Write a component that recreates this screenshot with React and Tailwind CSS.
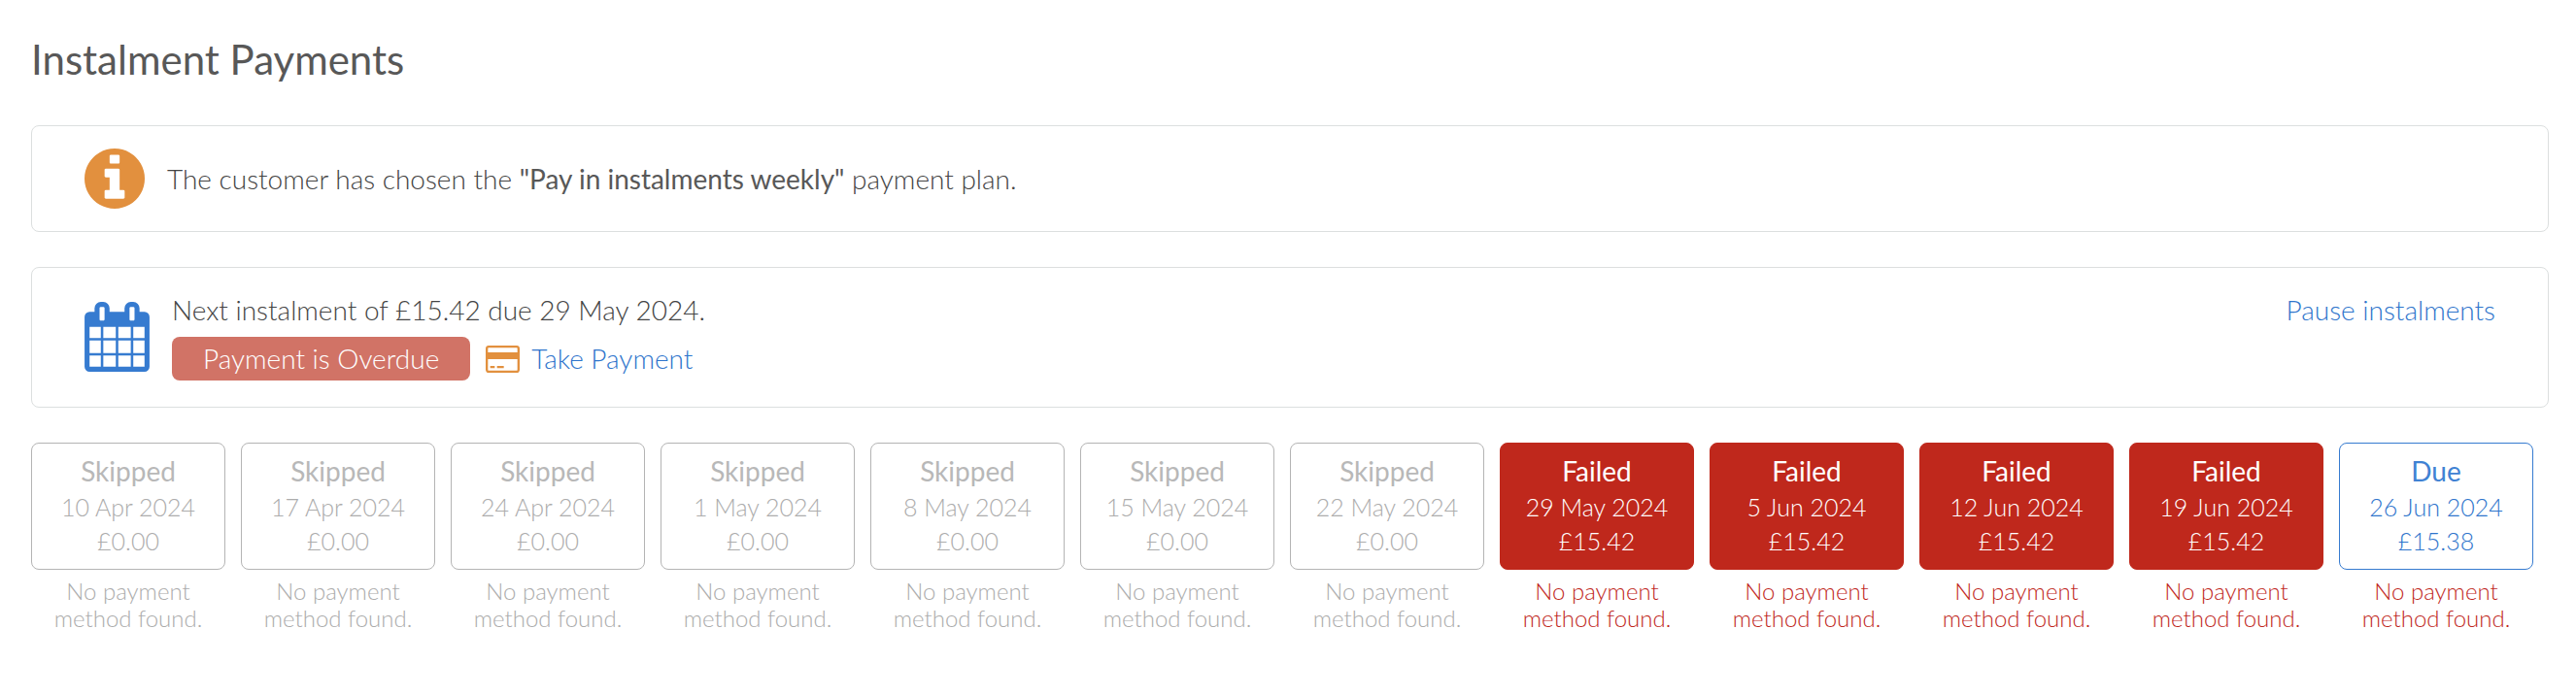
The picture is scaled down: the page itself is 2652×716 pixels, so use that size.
import React from 'react';

// Instalment schedule for the order
const instalments = [
    { id: 1, status: 'Skipped', date: '10 Apr 2024', amount: 0 },
    { id: 2, status: 'Skipped', date: '17 Apr 2024', amount: 0 },
    { id: 3, status: 'Skipped', date: '24 Apr 2024', amount: 0 },
    { id: 4, status: 'Skipped', date: '1 May 2024', amount: 0 },
    { id: 5, status: 'Skipped', date: '8 May 2024', amount: 0 },
    { id: 6, status: 'Skipped', date: '15 May 2024', amount: 0 },
    { id: 7, status: 'Skipped', date: '22 May 2024', amount: 0 },
    { id: 8, status: 'Failed', date: '29 May 2024', amount: 15.42 },
    { id: 9, status: 'Failed', date: '5 Jun 2024', amount: 15.42 },
    { id: 10, status: 'Failed', date: '12 Jun 2024', amount: 15.42 },
    { id: 11, status: 'Failed', date: '19 Jun 2024', amount: 15.42 },
    { id: 12, status: 'Due', date: '26 Jun 2024', amount: 15.38 },
];

const cardStyles = {
    Skipped: 'border-[#b4b4b4] text-[#acacac]',
    Failed: 'border-[#bf281c] bg-[#bf281c] text-white',
    Due: 'border-[#367bd0] text-[#2f75cc]',
};

const labelStyles = {
    Skipped: 'text-[#b8b8b8]',
    Failed: 'text-white',
    Due: 'text-[#4082d3]',
};

const noteStyles = {
    Skipped: 'text-[#acacac]',
    Failed: 'text-[#bf281c]',
    Due: 'text-[#bf281c]',
};

const InfoIcon = () => (
    <svg className="size-[62px] shrink-0 fill-[#e2903e]" viewBox="128 128 1536 1536" aria-hidden="true">
        <path d="M1152 1376v-160q0-14-9-23t-23-9h-96v-512q0-14-9-23t-23-9h-320q-14 0-23 9t-9 23v160q0 14 9 23t23 9h96v320h-96q-14 0-23 9t-9 23v160q0 14 9 23t23 9h448q14 0 23-9t9-23zm-128-896v-160q0-14-9-23t-23-9h-192q-14 0-23 9t-9 23v160q0 14 9 23t23 9h192q14 0 23-9t9-23zm640 416q0 209-103 385.5t-279.5 279.5-385.5 103-385.5-103-279.5-279.5-103-385.5 103-385.5 279.5-279.5 385.5-103 385.5 103 279.5 279.5 103 385.5z" />
    </svg>
);

const CalendarIcon = () => (
    <svg className="h-[72px] w-[67px] shrink-0 fill-[#367bd0]" viewBox="0 0 1664 1792" aria-hidden="true">
        <path d="M128 1664h288v-288h-288v288zm352 0h320v-288h-320v288zm-352-352h288v-320h-288v320zm352 0h320v-320h-320v320zm-352-384h288v-288h-288v288zm736 736h320v-288h-320v288zm-384-736h320v-288h-320v288zm768 736h288v-288h-288v288zm-384-352h320v-320h-320v320zm-352-864v-288q0-13-9.5-22.5t-22.5-9.5h-64q-13 0-22.5 9.5t-9.5 22.5v288q0 13 9.5 22.5t22.5 9.5h64q13 0 22.5-9.5t9.5-22.5zm736 864h288v-320h-288v320zm-384-384h320v-288h-320v288zm384 0h288v-288h-288v288zm32-480v-288q0-13-9.5-22.5t-22.5-9.5h-64q-13 0-22.5 9.5t-9.5 22.5v288q0 13 9.5 22.5t22.5 9.5h64q13 0 22.5-9.5t9.5-22.5zm384-64v1280q0 52-38 90t-90 38h-1408q-52 0-90-38t-38-90v-1280q0-52 38-90t90-38h128v-96q0-66 47-113t113-47h64q66 0 113 47t47 113v96h384v-96q0-66 47-113t113-47h64q66 0 113 47t47 113v96h128q52 0 90 38t38 90z" />
    </svg>
);

const CardIcon = () => (
    <svg className="h-7 w-[35px] shrink-0 fill-[#e2903e]" viewBox="0 128 1920 1536" aria-hidden="true">
        <path d="M1760 128q66 0 113 47t47 113v1216q0 66-47 113t-113 47h-1600q-66 0-113-47t-47-113v-1216q0-66 47-113t113-47h1600zm-1600 128q-13 0-22.5 9.5t-9.5 22.5v224h1664v-224q0-13-9.5-22.5t-22.5-9.5h-1600zm1600 1280q13 0 22.5-9.5t9.5-22.5v-608h-1664v608q0 13 9.5 22.5t22.5 9.5h1600zm-1504-128v-128h256v128h-256zm384 0v-128h384v128h-384z" />
    </svg>
);

const Instalment = ({ item }) => (
    <li className="pr-4 text-center">
        <div className={`rounded-lg border pt-2 pb-[11px] text-[25px] leading-[35px] ${cardStyles[item.status]}`}>
            <h2 className={`text-[28px] leading-10 font-normal ${labelStyles[item.status]}`}>{item.status}</h2>
            <p>{item.date}</p>
            <p>£{item.amount.toFixed(2)}</p>
        </div>
        <p className={`mt-2 text-2xl leading-7 ${noteStyles[item.status]}`}>
            No payment
            <br />
            method found.
        </p>
    </li>
);

const App = () => {
    return (
        <main className="px-7 pt-[33px] pl-8 font-['Lato',sans-serif] text-[28px] leading-10 font-light text-[#444444]">
            <h1 className="text-[42px] leading-14 font-normal text-[#585858]">Instalment Payments</h1>

            {/* Chosen plan */}
            <section className="mt-10 flex items-center gap-[23px] rounded-lg border border-[#dcdfdf] px-[54px] py-[23px]">
                <InfoIcon />
                <p>
                    The customer has chosen the{' '}
                    <strong className="font-normal text-[#585858]">"Pay in instalments weekly"</strong> payment plan.
                </p>
            </section>

            {/* Next instalment */}
            <section className="mt-9 flex items-start gap-[23px] rounded-lg border border-[#dcdfdf] px-[54px] pt-[23px] pb-[27px]">
                <div className="mt-3">
                    <CalendarIcon />
                </div>
                <div>
                    <p>Next instalment of £15.42 due 29 May 2024.</p>
                    <div className="mt-2 flex items-center gap-4 leading-[45px]">
                        <span className="rounded-lg bg-[#d17366] px-8 text-white">Payment is Overdue</span>
                        <a href="#take-payment" className="flex items-center gap-3 text-[#2f75cc]">
                            <CardIcon />
                            Take Payment
                        </a>
                    </div>
                </div>
                <button type="button" className="ml-auto text-[#2f75cc]">
                    Pause instalments
                </button>
            </section>

            {/* Schedule */}
            <ul className="mt-9 grid grid-cols-12">
                {instalments.map((item) => (
                    <Instalment key={item.id} item={item} />
                ))}
            </ul>
        </main>
    );
};

export default App;
